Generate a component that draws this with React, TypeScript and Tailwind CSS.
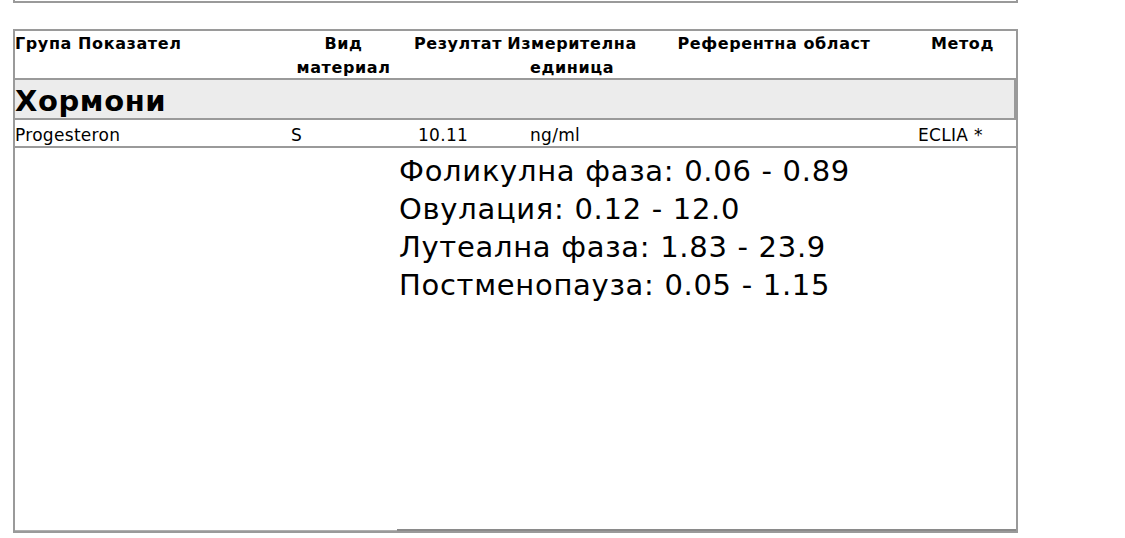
import React from "react";

const ranges = [
  "Фоликулна фаза: 0.06 - 0.89",
  "Овулация: 0.12 - 12.0",
  "Лутеална фаза: 1.83 - 23.9",
  "Постменопауза: 0.05 - 1.15",
];

const App: React.FC = () => {
  return (
    <div
      className="w-[1125px] h-[538px] bg-white text-black overflow-hidden"
      style={{ fontFamily: '"DejaVu Sans", Verdana, sans-serif' }}
    >
      {/* end of previous table */}
      <div className="ml-[13px] w-[1005px] h-[3px] border-x-2 border-b-2 border-[#9a9a9a]" />

      <div className="mt-[26px] ml-[13px] w-[1005px] border-2 border-[#9a9a9a]">
        {/* header */}
        <div className="flex h-[49px] pt-[1px] text-[16px] font-bold leading-[24px] tracking-[0.6px] border-b-2 border-[#9a9a9a]">
          <div className="w-[276px]">Група Показател</div>
          <div className="w-[105px] text-center">
            Вид
            <br />
            материал
          </div>
          <div className="w-[15px]" />
          <div className="w-[94px] text-center">Резултат</div>
          <div className="w-[134px] text-center">
            Измерителна
            <br />
            единица
          </div>
          <div className="w-[270px] text-center">Референтна област</div>
          <div className="w-[107px] text-center">Метод</div>
        </div>

        {/* group */}
        <div className="h-[40px] bg-[#ececec] border-b-2 border-r-2 border-[#9a9a9a] text-[29px] font-bold leading-[42px] tracking-[0.6px]">
          Хормони
        </div>

        {/* row */}
        <div className="flex h-[28px] text-[17px] leading-[30px] tracking-[0.3px] border-b-2 border-[#9a9a9a]">
          <div className="w-[275px]">Progesteron</div>
          <div className="w-[128px] pl-[1px]">S</div>
          <div className="w-[112px]">10.11</div>
          <div className="w-[388px]">ng/ml</div>
          <div className="flex-1">ECLIA *</div>
        </div>

        {/* reference */}
        <div className="flex h-[383px]">
          <div className="w-[382px] border-b border-[#b0b0b0]" />
          <div className="flex-1 border-b-2 border-[#8a8a8a] pt-[4px] pl-[2px] text-[29px] leading-[38px] tracking-[0.7px]">
            {ranges.map((r) => (
              <div key={r}>{r}</div>
            ))}
          </div>
        </div>
      </div>
    </div>
  );
};

export default App;
